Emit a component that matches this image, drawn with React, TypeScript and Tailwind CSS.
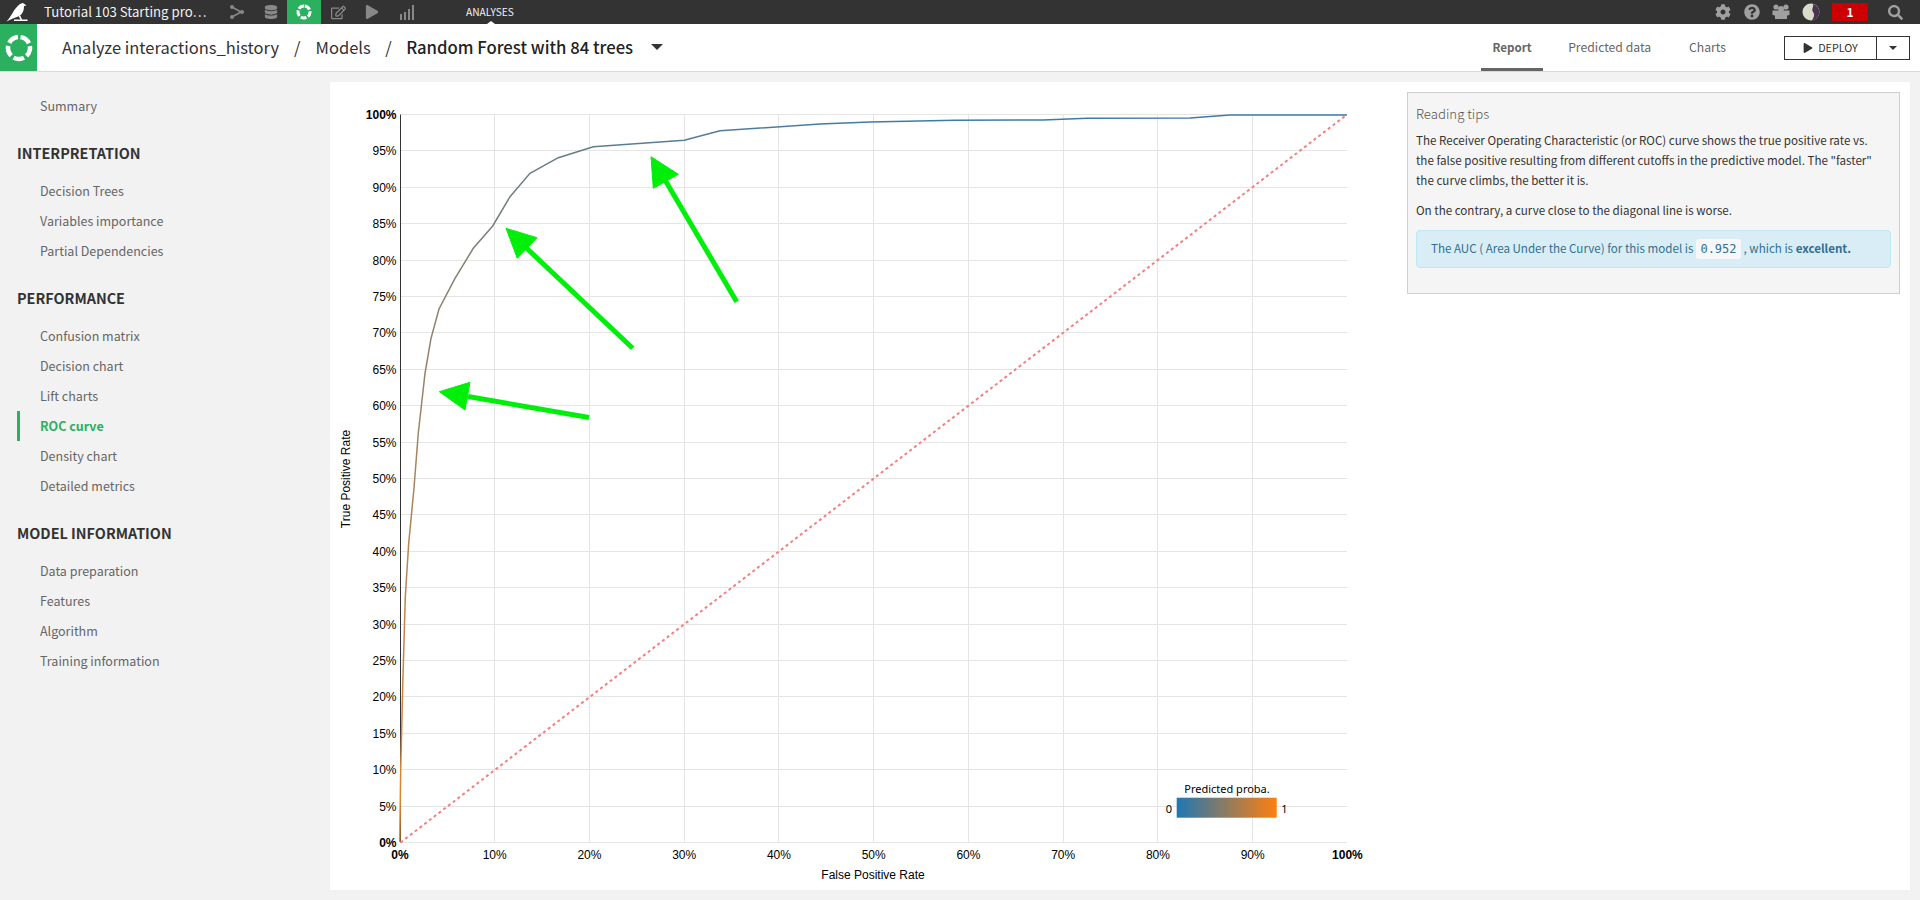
import { FaCog, FaDatabase, FaPlay, FaQuestionCircle, FaRegEdit, FaSearch } from "react-icons/fa";

const uiFont = "font-['Noto_Sans_CJK_JP','Source_Sans_Pro',sans-serif]";

const sections = [
  { title: "INTERPRETATION", items: ["Decision Trees", "Variables importance", "Partial Dependencies"] },
  { title: "PERFORMANCE", items: ["Confusion matrix", "Decision chart", "Lift charts", "ROC curve", "Density chart", "Detailed metrics"] },
  { title: "MODEL INFORMATION", items: ["Data preparation", "Features", "Algorithm", "Training information"] },
];

const X1 = 1347;
const Y0 = 842.5;
const Y1 = 114.5;
const xTicks = Array.from({ length: 11 }, (_, i) => i * 10);
const yTicks = Array.from({ length: 21 }, (_, i) => i * 5);
const crisp = (v: number) => Math.round(v - 0.5) + 0.5;

const curve =
  "399.7,842 400.7,770 402.7,686.7 405.3,596.7 408.7,543.3 414,488 418.3,433 425,373.3 431,338.3 439,309 455,278.3 473.3,248.3 492.7,226 510,196.7 530,173.3 558.3,157.7 593.3,146.7 684.3,140.3 720,130.7 820,124 870,122 955,120.3 1043,120 1087,118.3 1190,118 1230,115 1347,115";

function Ring({ size, r, width }: { size: number; r: number; width: number }) {
  const c = 2 * Math.PI * r;
  return (
    <svg width={size} height={size} viewBox={`0 0 ${size} ${size}`}>
      <circle
        cx={size / 2}
        cy={size / 2}
        r={r}
        fill="none"
        stroke="#fff"
        strokeWidth={width}
        strokeDasharray={`${c / 5 - c * 0.045} ${c * 0.045}`}
        transform={`rotate(-82 ${size / 2} ${size / 2})`}
      />
    </svg>
  );
}

function TopBar() {
  return (
    <div className={`flex items-center h-6 bg-[#333333] ${uiFont}`}>
      <svg width="22" height="20" viewBox="0 0 22 20" className="ml-[6px]">
        <path d="M0.5 19.5 C5 15 7 9 10 6 C12 3.5 14.5 1 17 1 L20.5 3.5 L18 4 C18 8 17 13 11 15 C8 16 5 17 0.5 19.5Z" fill="#fff" />
        <path d="M14 13 L16 17.5 L21.5 17.5 L21.5 19 L8 19 L8 17.5 L14.5 17.5 L12.5 14Z" fill="#fff" />
      </svg>
      <span className="ml-4 w-[172px] text-[13.2px] leading-6 text-[#f2f2f2] whitespace-nowrap">Tutorial 103 Starting pro…</span>
      <svg width="16" height="14" viewBox="0 0 16 14" className="ml-[13px]">
        <path d="M3 2 L12 7 L3 12" fill="none" stroke="#888" strokeWidth="1.6" />
        <circle cx="3" cy="2" r="2" fill="#888" />
        <circle cx="13" cy="7" r="2" fill="#888" />
        <circle cx="3" cy="12" r="2" fill="#888" />
      </svg>
      <FaDatabase className="ml-[19px] text-[#888] text-[14px]" />
      <div className="ml-[9px] flex items-center justify-center w-[34px] h-6 bg-[#2bb05f]">
        <Ring size={16} r={6} width={3} />
      </div>
      <FaRegEdit className="ml-[10px] text-[#888] text-[15px]" />
      <FaPlay className="ml-[19px] text-[#888] text-[14px]" />
      <svg width="15" height="15" viewBox="0 0 15 15" className="ml-[20px]">
        <path d="M1 9h2v6H1zM5 7h2v8H5zM9 4h2v11H9zM13 0h2v15h-2z" fill="#888" />
      </svg>
      <div className="relative ml-[52px] flex items-center h-6 text-[10.2px] text-[#f2f2f2]">
        ANALYSES
        <span className="absolute bottom-0 left-[21px] border-x-[4px] border-b-[3px] border-x-transparent border-b-white" />
      </div>
      <div className="flex-1" />
      <FaCog className="text-[#a0a0a0] text-[16px]" />
      <FaQuestionCircle className="ml-[13px] text-[#a0a0a0] text-[16px]" />
      <svg width="18" height="16" viewBox="0 0 18 16" className="ml-[12px]">
        <circle cx="4" cy="3" r="2.6" fill="#a0a0a0" />
        <circle cx="14" cy="3" r="2.6" fill="#a0a0a0" />
        <circle cx="9" cy="5" r="3" fill="#a0a0a0" />
        <path d="M0.5 6.5 H17.5 V11 L15 11.5 V15 H3 V11.5 L0.5 11Z" fill="#a0a0a0" />
      </svg>
      <svg width="18" height="18" viewBox="0 0 18 18" className="ml-[12px]">
        <circle cx="9" cy="9" r="8.5" fill="#d9dcc8" />
        <path d="M11 0.8 C14 2 17.5 5 17.5 9 C17.5 13 14 17 10 17.5 C12 14 13 12 11 9 C9 6 12 4 11 0.8Z" fill="#4a3550" />
      </svg>
      <div className="ml-[12px] flex items-center justify-center w-[36px] h-[18px] bg-[#cc0000] text-white text-[12px] font-bold">1</div>
      <FaSearch className="ml-[20px] mr-[17px] text-[#a0a0a0] text-[15px]" />
    </div>
  );
}

function Header() {
  return (
    <div className={`flex items-center h-12 bg-white border-b border-[#d9d9d9] ${uiFont}`}>
      <div className="flex items-center justify-center w-[37px] h-full bg-[#2bb05f] shrink-0">
        <Ring size={28} r={11} width={4.5} />
      </div>
      <div className="ml-[25px] flex items-center text-[16.5px] text-[#333] whitespace-nowrap">
        <span>Analyze interactions_history</span>
        <span className="mx-[15px]">/</span>
        <span>Models</span>
        <span className="mx-[14.5px]">/</span>
        <span className="text-[16.7px] font-medium text-[#222]">Random Forest with 84 trees</span>
        <span className="ml-[18px] border-x-[6px] border-t-[6px] border-x-transparent border-t-[#333]" />
      </div>
      <div className="flex-1" />
      <div className="flex h-full text-[12.2px] text-[#666]">
        <div className="flex items-center justify-center w-[62px] pt-[3px] text-[11.6px] font-bold border-b-[3px] border-[#666]">Report</div>
        <div className="flex items-center ml-[25px]">Predicted data</div>
        <div className="flex items-center ml-[38px]">Charts</div>
      </div>
      <div className="ml-[58px] mr-[10px] flex h-6 border border-[#333] text-[10.8px] text-[#333]">
        <div className="flex items-center justify-center gap-[5px] w-[92px] border-r border-[#333]">
          <FaPlay className="text-[10px]" />
          DEPLOY
        </div>
        <div className="flex items-center justify-center w-[32px]">
          <span className="border-x-[4px] border-t-[4px] border-x-transparent border-t-[#333]" />
        </div>
      </div>
    </div>
  );
}

function Sidebar() {
  return (
    <div className={`w-[330px] shrink-0 pt-[19px] ${uiFont}`}>
      <div className="pl-[40px] h-[30px] leading-[30px] text-[12.5px] text-[#666]">Summary</div>
      {sections.map((section) => (
        <div key={section.title}>
          <div className="pl-[17px] mt-[17px] mb-[8px] h-[30px] leading-[30px] text-[14.4px] font-bold text-[#333]">{section.title}</div>
          {section.items.map((item) =>
            item === "ROC curve" ? (
              <div key={item} className="ml-[17px] pl-[20px] h-[30px] leading-[30px] border-l-[3px] border-[#2bb05f] text-[12.5px] font-bold text-[#2bb05f]">
                {item}
              </div>
            ) : (
              <div key={item} className="pl-[40px] h-[30px] leading-[30px] text-[12.5px] text-[#666]">
                {item}
              </div>
            ),
          )}
        </div>
      ))}
    </div>
  );
}

function RocChart() {
  const axisX = 400.5;
  return (
    <svg width="1077" height="808" viewBox="330 82 1077 808" className="shrink-0 font-['Liberation_Sans',sans-serif]">
      <defs>
        <linearGradient id="curveColor" gradientUnits="userSpaceOnUse" x1="400" y1="842" x2="900" y2="114">
          <stop offset="0" stopColor="#e0862a" />
          <stop offset="0.35" stopColor="#a8845e" />
          <stop offset="0.6" stopColor="#7f8074" />
          <stop offset="0.78" stopColor="#5f7c90" />
          <stop offset="1" stopColor="#3d7ba8" />
        </linearGradient>
        <linearGradient id="legendColor">
          <stop offset="0" stopColor="#1f77b4" />
          <stop offset="1" stopColor="#ff7f0e" />
        </linearGradient>
      </defs>

      {yTicks.map((t) => {
        const y = crisp(Y0 - ((Y0 - Y1) * t) / 100);
        return (
          <g key={t}>
            <line x1={axisX} x2={X1} y1={y} y2={y} stroke="#e5e5e5" />
            <text x={396.5} y={y + 4} textAnchor="end" fontSize="12" fontWeight={t === 0 || t === 100 ? "bold" : "normal"} fill="#000">
              {t}%
            </text>
          </g>
        );
      })}
      {xTicks.map((t) => {
        const x = 399.9 + 9.475 * t;
        return (
          <g key={t}>
            {t > 0 && t < 100 && <line x1={crisp(x)} x2={crisp(x)} y1={Y1} y2={Y0} stroke="#e5e5e5" />}
            <text x={x} y={859} textAnchor="middle" fontSize="12" fontWeight={t === 0 || t === 100 ? "bold" : "normal"} fill="#000">
              {t}%
            </text>
          </g>
        );
      })}
      <line x1={axisX} x2={axisX} y1={Y1} y2={Y0} stroke="#333" />

      <line x1={axisX} y1={Y0} x2={X1} y2={Y1} stroke="#f47f7f" strokeWidth="2" strokeDasharray="3 3" />
      <polyline points={curve} fill="none" stroke="url(#curveColor)" strokeWidth="1.5" />

      <rect x="1176.7" y="797.7" width="100" height="20" fill="url(#legendColor)" />
      <text x="1227" y="793" textAnchor="middle" fontSize="11" fill="#000" className="font-['Noto_Sans',sans-serif]">Predicted proba.</text>
      <text x="1169" y="813" textAnchor="middle" fontSize="11" fill="#000" className="font-['Noto_Sans',sans-serif]">0</text>
      <text x="1284.5" y="813" textAnchor="middle" fontSize="11" fill="#000" className="font-['Noto_Sans',sans-serif]">1</text>

      <text x="873" y="879" textAnchor="middle" fontSize="12" fill="#000">False Positive Rate</text>
      <text transform="translate(350 479) rotate(-90)" textAnchor="middle" fontSize="12" fill="#000">True Positive Rate</text>

      <g fill="#00ef0a" stroke="#00ef0a">
        <line x1="468" y1="396.5" x2="589" y2="417.5" strokeWidth="5" />
        <polygon points="439.3,391.7 470,382.3 465,410" />
        <line x1="526.7" y1="248.3" x2="632.7" y2="348.3" strokeWidth="5" />
        <polygon points="506,228.3 537,237.7 517.3,258.3" />
        <line x1="665" y1="180" x2="736.7" y2="301.7" strokeWidth="5" />
        <polygon points="651,156.7 678.3,174.3 653.3,188.3" />
      </g>
    </svg>
  );
}

function ReadingTips() {
  return (
    <div className={`w-[493px] h-[202px] mt-[10px] px-[8px] pt-[9px] bg-[#f5f5f5] border border-[#cfcfcf] text-[11.6px] text-[#333] ${uiFont}`}>
      <div className="text-[13.2px] leading-[24px] font-light text-[#555]">Reading tips</div>
      <p className="mt-[4px] leading-[20px]">
        The Receiver Operating Characteristic (or ROC) curve shows the true positive rate vs.
        <br />
        the false positive resulting from different cutoffs in the predictive model. The "faster"
        <br />
        the curve climbs, the better it is.
      </p>
      <p className="mt-[10px] leading-[20px]">On the contrary, a curve close to the diagonal line is worse.</p>
      <div className="mt-[10px] flex items-center h-[38px] pl-[14px] bg-[#d9edf7] border border-[#bce8f1] rounded-[4px] text-[#31708f] whitespace-nowrap">
        The AUC ( Area Under the Curve) for this model is
        <code className="mx-[3px] px-[4px] py-px bg-[#f7f7f9] rounded-[3px] text-[12px] font-['DejaVu_Sans_Mono',monospace] text-[#31708f]">0.952</code>
        , which is&nbsp;<b>excellent.</b>
      </div>
    </div>
  );
}

export default function App() {
  return (
    <div className="h-[900px] w-[1920px] overflow-hidden bg-[#f2f2f2]">
      <TopBar />
      <Header />
      <div className="flex">
        <Sidebar />
        <div className="flex mt-[10px] w-[1580px] h-[808px] bg-white">
          <RocChart />
          <ReadingTips />
        </div>
      </div>
    </div>
  );
}
